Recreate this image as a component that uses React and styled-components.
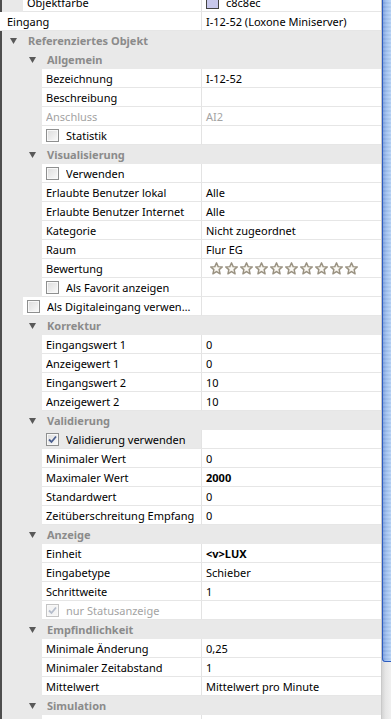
import React from "react";
import styled, { createGlobalStyle } from "styled-components";

const GlobalStyle = createGlobalStyle`
  html, body {
    margin: 0;
    padding: 0;
    background: #ffffff;
    overflow: hidden;
  }
`;

const VALUE_COL = 201;
const ROW_H = 19;

const indentFor = (level) => (level === 0 ? 0 : 4 + 19 * level);

const rows = [
  { type: "prop", level: 1, name: "Objektfarbe", value: "c8c8ec", swatch: "#c8c8ec" },
  { type: "prop", level: 0, name: "Eingang", value: "I-12-52 (Loxone Miniserver)" },
  { type: "cat", level: 0, name: "Referenziertes Objekt" },
  { type: "cat", level: 1, name: "Allgemein" },
  { type: "prop", level: 2, name: "Bezeichnung", value: "I-12-52" },
  { type: "prop", level: 2, name: "Beschreibung", value: "" },
  { type: "prop", level: 2, name: "Anschluss", value: "AI2", disabled: true },
  { type: "check", level: 2, name: "Statistik" },
  { type: "cat", level: 1, name: "Visualisierung" },
  { type: "check", level: 2, name: "Verwenden" },
  { type: "prop", level: 2, name: "Erlaubte Benutzer lokal", value: "Alle" },
  { type: "prop", level: 2, name: "Erlaubte Benutzer Internet", value: "Alle" },
  { type: "prop", level: 2, name: "Kategorie", value: "Nicht zugeordnet" },
  { type: "prop", level: 2, name: "Raum", value: "Flur EG" },
  { type: "prop", level: 2, name: "Bewertung", stars: 10 },
  { type: "check", level: 2, name: "Als Favorit anzeigen" },
  { type: "check", level: 1, name: "Als Digitaleingang verwenden" },
  { type: "cat", level: 1, name: "Korrektur" },
  { type: "prop", level: 2, name: "Eingangswert 1", value: "0" },
  { type: "prop", level: 2, name: "Anzeigewert 1", value: "0" },
  { type: "prop", level: 2, name: "Eingangswert 2", value: "10" },
  { type: "prop", level: 2, name: "Anzeigewert 2", value: "10" },
  { type: "cat", level: 1, name: "Validierung" },
  { type: "check", level: 2, name: "Validierung verwenden", checked: true, shaded: true },
  { type: "prop", level: 2, name: "Minimaler Wert", value: "0" },
  { type: "prop", level: 2, name: "Maximaler Wert", value: "2000", bold: true },
  { type: "prop", level: 2, name: "Standardwert", value: "0" },
  { type: "prop", level: 2, name: "Zeitüberschreitung Empfang", value: "0" },
  { type: "cat", level: 1, name: "Anzeige" },
  { type: "prop", level: 2, name: "Einheit", value: "<v>LUX", bold: true },
  { type: "prop", level: 2, name: "Eingabetype", value: "Schieber" },
  { type: "prop", level: 2, name: "Schrittweite", value: "1" },
  { type: "check", level: 2, name: "nur Statusanzeige", checked: true, disabled: true },
  { type: "cat", level: 1, name: "Empfindlichkeit" },
  { type: "prop", level: 2, name: "Minimale Änderung", value: "0,25" },
  { type: "prop", level: 2, name: "Minimaler Zeitabstand", value: "1" },
  { type: "prop", level: 2, name: "Mittelwert", value: "Mittelwert pro Minute" },
  { type: "cat", level: 1, name: "Simulation" },
  { type: "prop", level: 2, name: "", value: "" },
];

const Frame = styled.div`
  display: flex;
  width: 391px;
  height: 719px;
  overflow: hidden;
  font-family: "Noto Sans", "Open Sans", sans-serif;
  font-size: 11px;
  color: #000;
`;

const Grid = styled.div`
  flex: 1;
  display: flex;
  flex-direction: column;
  margin-top: -7px;
  min-width: 0;
`;

const Row = styled.div`
  display: flex;
  height: ${ROW_H}px;
  flex-shrink: 0;
`;

const Gutter = styled.div`
  width: ${(p) => p.$width}px;
  flex-shrink: 0;
  box-sizing: border-box;
  background: #e9e9e9;
  border-left: 2px solid #4e4e4e;
`;

const NameCell = styled.div`
  width: ${(p) => p.$width}px;
  flex-shrink: 0;
  box-sizing: border-box;
  display: flex;
  align-items: center;
  padding-left: ${(p) => p.$pad}px;
  background: ${(p) => (p.$shaded ? "#e9e9e9" : "#ffffff")};
  border-bottom: 1px solid #e6e6e6;
  color: ${(p) => (p.$disabled ? "#a3a3a3" : "#000")};
  white-space: nowrap;
  overflow: hidden;
`;

const Label = styled.span`
  overflow: hidden;
  text-overflow: ellipsis;
  white-space: nowrap;
  min-width: 0;
  padding-right: 6px;
`;

const ValueCell = styled.div`
  flex: 1;
  min-width: 0;
  box-sizing: border-box;
  display: flex;
  align-items: center;
  gap: 7px;
  padding-left: 4px;
  background: #ffffff;
  border-left: 1px solid #e3e3e3;
  border-bottom: 1px solid #e6e6e6;
  color: ${(p) => (p.$disabled ? "#a3a3a3" : "#000")};
  font-weight: ${(p) => (p.$bold ? 700 : 400)};
  white-space: nowrap;
  overflow: hidden;
`;

const CategoryRow = styled.div`
  display: flex;
  align-items: center;
  height: ${ROW_H}px;
  flex-shrink: 0;
  box-sizing: border-box;
  background: #e9e9e9;
  border-left: 2px solid #4e4e4e;
  padding-left: ${(p) => 8 + 19 * p.$level}px;
  color: #8b8b8b;
  font-weight: 700;
`;

const Arrow = styled.svg`
  width: 7px;
  height: 6px;
  margin-right: 11px;
  flex-shrink: 0;
`;

const Box = styled.span`
  width: 11px;
  height: 11px;
  flex-shrink: 0;
  margin-right: 7px;
  border: 1px solid ${(p) => (p.$disabled ? "#c4c4c4" : "#8e8f8f")};
  background: ${(p) =>
    p.$disabled
      ? "#f4f4f4"
      : "linear-gradient(135deg, #dcdcdc 0%, #eeeeee 60%, #fbfbfb 100%)"};
  box-shadow: inset 0 0 0 1px #f8f8f8;
  display: flex;
  align-items: center;
  justify-content: center;
`;

const Swatch = styled.span`
  width: 11px;
  height: 11px;
  flex-shrink: 0;
  border: 1px solid #444;
  background: ${(p) => p.$color};
`;

const Stars = styled.div`
  display: flex;
  gap: 2px;
  padding-left: 4px;
`;

const ScrollBar = styled.div`
  width: 9px;
  flex-shrink: 0;
  display: flex;
  flex-direction: column;
  border-left: 1px solid #c9c9c9;
`;

const Thumb = styled.div`
  height: 662px;
  box-sizing: border-box;
  border-left: 1px solid #2c5cbf;
  border-bottom: 1px solid #2c5cbf;
  border-bottom-left-radius: 3px;
  background: repeating-linear-gradient(
      180deg,
      rgba(255, 255, 255, 0.08) 0px,
      rgba(255, 255, 255, 0.08) 2px,
      rgba(0, 0, 0, 0.03) 2px,
      rgba(0, 0, 0, 0.03) 4px
    ),
    linear-gradient(90deg, #7ea2e0 0%, #9fc0f0 40%, #b9d5f8 100%);
`;

const Track = styled.div`
  flex: 1;
  background: linear-gradient(90deg, #d4d4d4 0%, #e6e6e6 40%, #f0f0f0 100%);
`;

const Check = ({ faded }) => (
  <svg width="9" height="9" viewBox="0 0 9 9">
    <path
      d="M1 4.5 L3.5 7 L8 1.5"
      fill="none"
      stroke={faded ? "#b4bccb" : "#4b5f8f"}
      strokeWidth="1.8"
    />
  </svg>
);

const Star = () => (
  <svg width="13" height="13" viewBox="0 0 13 13">
    <polygon
      points="6.5,0.8 8.2,4.6 12.3,4.9 9.2,7.6 10.1,11.8 6.5,9.6 2.9,11.8 3.8,7.6 0.7,4.9 4.8,4.6"
      fill="#ebe7dd"
      stroke="#9a9282"
      strokeWidth="1.4"
      strokeLinejoin="round"
    />
    <polygon
      points="6.5,4 7.3,5.8 9.2,6 7.8,7.2 8.2,9.1 6.5,8.1 4.8,9.1 5.2,7.2 3.8,6 5.7,5.8"
      fill="#fbfaf6"
    />
  </svg>
);

const Category = ({ row }) => (
  <CategoryRow $level={row.level}>
    <Arrow viewBox="0 0 7 6">
      <polygon points="0,0 7,0 3.5,6" fill="#595959" />
    </Arrow>
    {row.name}
  </CategoryRow>
);

const Property = ({ row }) => {
  const indent = indentFor(row.level);
  const pad = row.level === 0 ? 7 : 4;
  return (
    <Row>
      {indent > 0 && <Gutter $width={indent} />}
      <NameCell
        $width={VALUE_COL - indent}
        $pad={pad}
        $shaded={row.shaded}
        $disabled={row.disabled}
      >
        {row.type === "check" && (
          <Box $disabled={row.disabled}>
            {row.checked && <Check faded={row.disabled} />}
          </Box>
        )}
        <Label>{row.name}</Label>
      </NameCell>
      <ValueCell $bold={row.bold} $disabled={row.disabled}>
        {row.swatch && <Swatch $color={row.swatch} />}
        {row.stars ? (
          <Stars>
            {Array.from({ length: row.stars }).map((_, i) => (
              <Star key={i} />
            ))}
          </Stars>
        ) : (
          row.value
        )}
      </ValueCell>
    </Row>
  );
};

const App = () => (
  <>
    <GlobalStyle />
    <Frame>
      <Grid>
        {rows.map((row, i) =>
          row.type === "cat" ? (
            <Category key={i} row={row} />
          ) : (
            <Property key={i} row={row} />
          )
        )}
      </Grid>
      <ScrollBar>
        <Thumb />
        <Track />
      </ScrollBar>
    </Frame>
  </>
);

export default App;
